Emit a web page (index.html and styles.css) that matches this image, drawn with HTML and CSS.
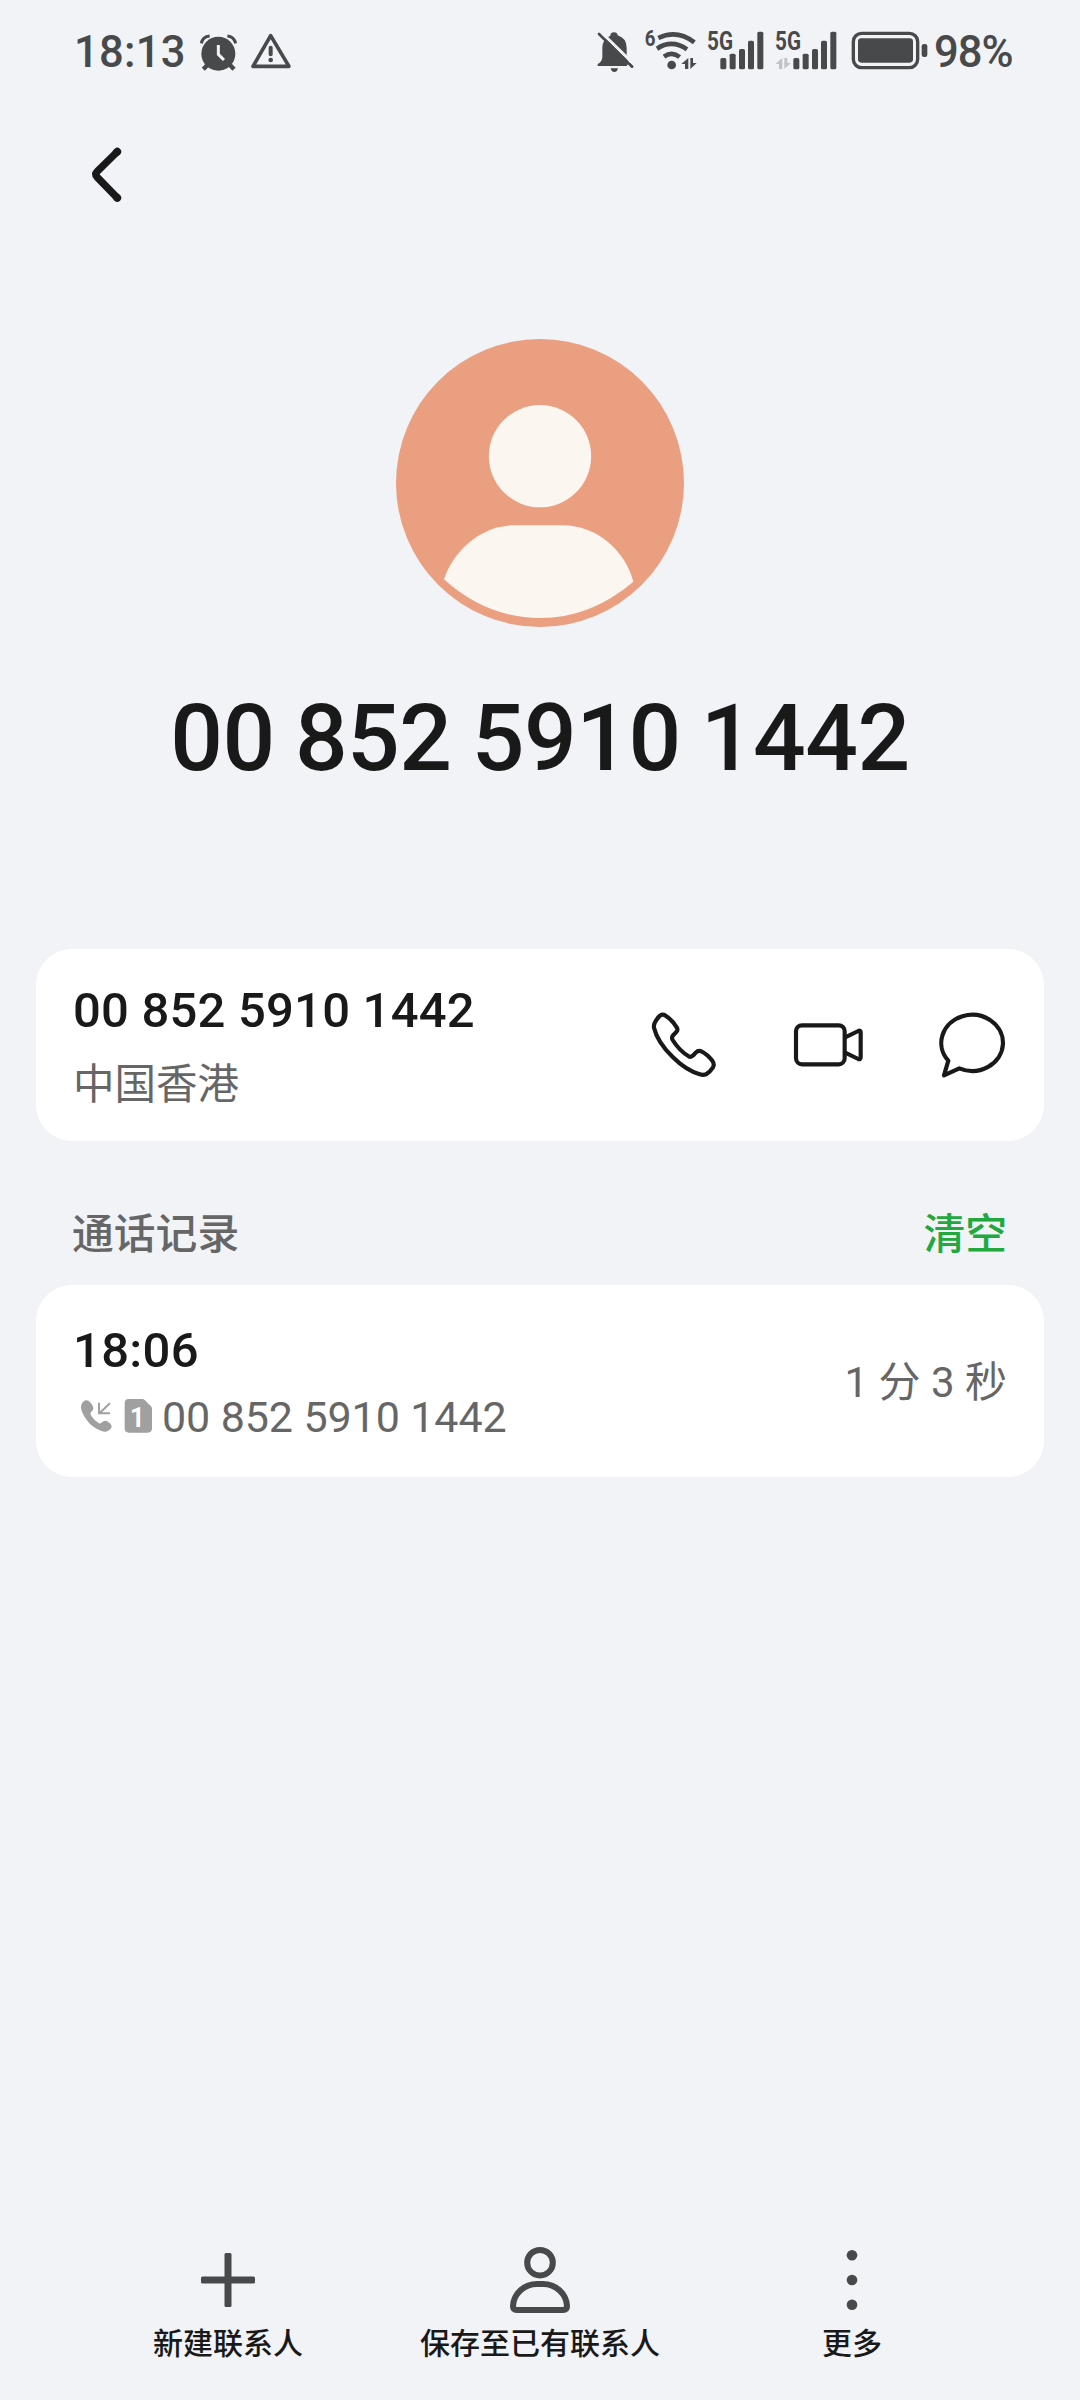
FILE: index.html
```html
<!DOCTYPE html>
<html lang="zh-CN">
<head>
<meta charset="utf-8">
<title>联系人</title>
<link rel="stylesheet" href="styles.css">
</head>
<body>
<div class="screen">
  <header class="status">
    <div class="status-group">
      <span class="clock">18:13</span>
      <svg class="icon-alarm" viewBox="417 48 117 120">
        <circle cx="475" cy="113" r="51" fill="#48494b"/>
        <path d="M424 82Q428 62 449 60M527 82Q522 62 502 60" fill="none" stroke="#48494b" stroke-width="9"/>
        <path d="M442 147L430 160M510 147L522 160" stroke="#48494b" stroke-width="13"/>
        <path d="M475 87V115L492 132" fill="none" stroke="#f1f3f7" stroke-width="9"/>
      </svg>
      <svg class="icon-warning" viewBox="570 48 126 120">
        <path d="M632 59L579 151H687Z" fill="none" stroke="#48494b" stroke-width="11" stroke-linejoin="round"/>
        <path d="M632 95V115" stroke="#48494b" stroke-width="12" stroke-linecap="round"/>
        <circle cx="632" cy="132" r="7" fill="#48494b"/>
      </svg>
    </div>
    <div class="status-group status-right">
      <svg class="icon-bell" viewBox="51 45 120 129">
        <path d="M53 153V147Q67 139 67 125V98Q67 72 91 62Q92 52 102 52Q112 52 113 61Q140 70 140 98V125Q141 139 153 147V153Z" fill="#48494b"/>
        <path d="M92 160H114Q112 171 103 171Q94 171 92 160Z" fill="#48494b"/>
        <path d="M63 51L166 152" stroke="#f1f3f7" stroke-width="9"/>
        <path d="M57 57L156 155" stroke="#48494b" stroke-width="8" stroke-linecap="round"/>
        <path d="M150 137V158H137Z" fill="#f1f3f7"/>
        <path d="M146 145L156 155" stroke="#48494b" stroke-width="8" stroke-linecap="round"/>
      </svg>
      <svg class="icon-wifi" viewBox="195 45 162 129">
        <text class="net" x="194" y="93" font-size="64" textLength="32" lengthAdjust="spacingAndGlyphs">6</text>
        <path d="M235 69Q290 42 343 82M231 101Q276 72 321 103M252 125Q276 108 299 126" fill="none" stroke="#48494b" stroke-width="14"/>
        <circle cx="275" cy="150" r="13" fill="#48494b"/>
        <path d="M325 129V162H315V147H304ZM331 129V162L350 144H339V129Z" fill="#48494b"/>
      </svg>
      <svg class="icon-signal" viewBox="381 45 180 129">
        <text class="net" x="381" y="105" font-size="76" textLength="78" lengthAdjust="spacingAndGlyphs">5G</text>
        <g fill="#48494b">
          <rect x="421" y="129" width="18" height="34" rx="5"/><rect x="449" y="116" width="18" height="47" rx="5"/><rect x="477" y="102" width="18" height="61" rx="5"/><rect x="504" y="77" width="18" height="86" rx="5"/><rect x="532" y="50" width="18" height="113" rx="5"/>
        </g>
      </svg>
      <svg class="icon-signal-alt" viewBox="585 45 207 129">
        <text class="net" x="585" y="105" font-size="76" textLength="78" lengthAdjust="spacingAndGlyphs">5G</text>
        <path d="M607 129V162H597V147H586ZM613 129V162L633 144H622V129Z" fill="#c2c3c6"/>
        <g fill="#48494b">
          <rect x="640" y="129" width="18" height="34" rx="5"/><rect x="668" y="116" width="18" height="47" rx="5"/><rect x="696" y="102" width="18" height="61" rx="5"/><rect x="723" y="77" width="18" height="86" rx="5"/><rect x="751" y="50" width="18" height="113" rx="5"/>
        </g>
      </svg>
      <svg class="icon-battery" viewBox="66 45 222 129">
        <rect x="70" y="55" width="193" height="103" rx="25" fill="none" stroke="#48494b" stroke-width="10"/>
        <rect x="84" y="70" width="165" height="73" rx="10" fill="#48494b"/>
        <rect x="275" y="87" width="17" height="39" rx="7" fill="#48494b"/>
      </svg>
      <span class="percent">98%</span>
    </div>
  </header>

  <nav class="topbar">
    <svg class="icon-back" viewBox="90 75 105 180">
      <path d="M174 93L112 154Q103 163 112 172L174 236" fill="none" stroke="#191919" stroke-width="22"/>
      <path d="M170 97L172 95M170 232L172 234" fill="none" stroke="#191919" stroke-width="23" stroke-linecap="round"/>
    </svg>
  </nav>

  <section class="hero">
    <svg class="avatar" viewBox="48 56 864 864">
      <circle cx="480" cy="488" r="432" fill="#ea9f80"/>
      <circle cx="480" cy="407.500" r="153.500" fill="#fcf6f0"/>
      <path d="M192 777C220 692 302 615 402 615H548C650 615 735 690 760 784Q632 893 480 893Q320 893 192 777Z" fill="#fcf6f0"/>
    </svg>
    <h1 class="title">00 852 5910 1442</h1>
  </section>

  <section class="card">
    <div>
      <div class="primary number">00 852 5910 1442</div>
      <div class="region">中国香港</div>
    </div>
    <div class="actions">
      <svg class="action" viewBox="60 93 204 204">
        <path d="M90 107Q98 101 107 107Q127 120 140 142Q145 149 139 156L131 164Q123 171 128 180Q148 212 176 229Q183 233 190 226L197 218Q205 210 214 214Q233 223 248 244Q254 253 249 262Q240 276 228 283Q219 286 209 283Q168 271 129 232Q82 186 72 143Q71 135 74 129Q80 116 90 107Z"/>
      </svg>
      <svg class="action" viewBox="493 93 204 204">
        <rect x="499" y="136" width="146" height="117" rx="18"/>
        <path d="M645 173L686 153Q693 150 693 157V232Q693 240 686 237L645 217"/>
      </svg>
      <svg class="action" viewBox="925 93 204 204">
        <path d="M956 242A92.500 84 0 1 1 989 265L943 286Z"/>
      </svg>
    </div>
  </section>

  <div class="section-head">
    <span>通话记录</span>
    <span class="clear">清空</span>
  </div>

  <section class="card">
    <div>
      <div class="primary time">18:06</div>
      <div class="detail">
        <svg class="icon-incoming" viewBox="150 624 96 108">
          <path d="M153 648Q153 640 162 633Q170 628 177 634Q188 642 190 655Q190 661 183 667Q179 672 184 678Q193 691 205 699Q211 702 214 698Q222 691 230 693Q241 698 245 707Q246 714 238 720Q232 726 222 725Q199 719 180 702Q157 677 153 655Z" fill="#a0a0a0"/>
          <path d="M240 640L209 669M207 638V670H240" fill="none" stroke="#a0a0a0" stroke-width="6"/>
        </svg>
        <svg class="icon-sim" viewBox="282 624 84 108">
          <path d="M296 627H337Q341 627 344 630L363 649Q366 652 366 657V715Q366 728 353 728H297Q284 728 284 715V640Q284 627 296 627Z" fill="#a0a0a0"/>
          <text class="sim-number" x="300" y="710" font-size="82" textLength="44" lengthAdjust="spacingAndGlyphs">1</text>
        </svg>
        <span class="call-number">00 852 5910 1442</span>
      </div>
    </div>
    <div class="duration">1 分 3 秒</div>
  </section>

  <footer class="tabs">
    <div class="tab">
      <svg class="tab-icon" viewBox="0 0 72 72"><g fill="#48494b"><rect x="9" y="32.500" width="54" height="7" rx="1.500"/><rect x="32.500" y="9" width="7" height="54" rx="1.500"/></g></svg>
      <span>新建联系人</span>
    </div>
    <div class="tab">
      <svg class="tab-icon" viewBox="0 0 72 72"><g fill="none" stroke="#48494b" stroke-width="6"><circle cx="36" cy="18.700" r="12.800"/><path d="M33 40H39C52 40 62.500 50 63 62Q63 66 59 66H13Q9 66 9 62C9.500 50 20 40 33 40Z"/></g></svg>
      <span>保存至已有联系人</span>
    </div>
    <div class="tab">
      <svg class="tab-icon" viewBox="0 0 72 72"><g fill="#48494b"><circle cx="36" cy="11.200" r="5.300"/><circle cx="36" cy="36" r="5.300"/><circle cx="36" cy="60.800" r="5.300"/></g></svg>
      <span>更多</span>
    </div>
  </footer>
</div>
</body>
</html>
```
FILE: styles.css
```css
* { box-sizing: border-box; }
body {
  margin: 0;
  background: #f1f3f7;
  color: #191919;
  font-family: Roboto, "Noto Sans CJK SC", sans-serif;
}
svg { display: block; flex: none; overflow: visible; }
.screen {
  width: 1080px;
  height: 2400px;
  display: flex;
  flex-direction: column;
}
.status {
  height: 103px;
  padding: 0 64px 0 74px;
  display: flex;
  justify-content: space-between;
  align-items: center;
  color: #48494b;
  font-size: 43.500px;
  font-weight: 500;
  line-height: 50px;
  white-space: nowrap;
}
.status-group { display: flex; align-items: center; }
.status-right { gap: 8px; }
.clock { width: 125px; padding-top: 2px; letter-spacing: 0.300px; }
.percent { width: 82px; padding-top: 2px; letter-spacing: -1px; }
.icon-alarm { width: 39px; height: 40px; }
.icon-warning { width: 42px; height: 40px; margin-left: 12px; }
.icon-bell { width: 40px; height: 43px; }
.icon-wifi { width: 54px; height: 43px; }
.icon-signal { width: 60px; height: 43px; }
.icon-signal-alt { width: 69px; height: 43px; }
.icon-battery { width: 74px; height: 43px; }
.net { font-weight: 700; fill: #48494b; }
.topbar { height: 145px; padding: 42px 90px 0; }
.icon-back { width: 35px; height: 60px; }
.hero {
  height: 701px;
  padding-top: 91px;
  display: flex;
  flex-direction: column;
  align-items: center;
}
.avatar { width: 288px; height: 288px; }
.title {
  margin: 56px 0 0;
  font-size: 92.800px;
  line-height: 112px;
  font-weight: 500;
  letter-spacing: -0.500px;
  word-spacing: -2.500px;
  white-space: nowrap;
}
.card {
  flex: none;
  height: 192px;
  margin: 0 36px;
  padding: 0 37px;
  border-radius: 36px;
  background: #fff;
  display: flex;
  justify-content: space-between;
  align-items: center;
  white-space: nowrap;
}
.primary { font-size: 49px; line-height: 64px; font-weight: 500; }
.number { padding-top: 4px; letter-spacing: 0.200px; }
.time { letter-spacing: 0.300px; }
.region { font-size: 41.500px; line-height: 60px; margin-top: 12px; color: #666; }
.actions { display: flex; gap: 76px; margin-right: 1px; }
.action {
  width: 68px;
  height: 68px;
  fill: none;
  stroke: #191919;
  stroke-width: 12.500;
  stroke-linejoin: round;
}
.section-head {
  height: 144px;
  padding: 64px 73px 0 72px;
  display: flex;
  justify-content: space-between;
  font-size: 41.800px;
  line-height: 60px;
  font-weight: 500;
  color: #666;
}
.clear { color: #22a83f; }
.detail {
  display: flex;
  align-items: center;
  height: 60px;
  margin-top: 3px;
  margin-bottom: -3px;
  padding-left: 7px;
  color: #666;
}
.icon-incoming { width: 32px; height: 36px; }
.icon-sim { width: 28px; height: 36px; margin-left: 12px; }
.sim-number { fill: #fff; font-weight: 700; }
.call-number { margin-left: 10px; padding-top: 1px; font-size: 43px; line-height: 60px; letter-spacing: -0.100px; }
.duration { padding-top: 3px; font-size: 42px; line-height: 60px; color: #666; }
.tabs {
  margin-top: auto;
  height: 156px;
  padding: 0 72px;
  display: flex;
}
.tab {
  flex: 1;
  display: flex;
  flex-direction: column;
  align-items: center;
  font-size: 30px;
  line-height: 40px;
  font-weight: 500;
}
.tab-icon { width: 72px; height: 72px; margin-bottom: 8px; }
```
